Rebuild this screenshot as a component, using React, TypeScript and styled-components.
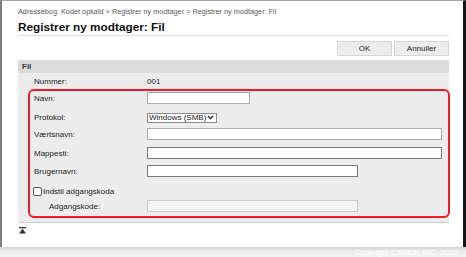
import React, { ReactElement } from "react";
import styled, { createGlobalStyle } from "styled-components";

const GlobalStyle = createGlobalStyle`
  html, body {
    margin: 0;
    padding: 0;
    background: #ffffff;
  }
  * {
    box-sizing: border-box;
  }
`;

const Screen = styled.div`
  width: 466px;
  height: 257px;
  display: flex;
  flex-direction: column;
  font-family: "Liberation Sans", Arial, sans-serif;
  overflow: hidden;
`;

const Window = styled.div`
  flex: 0 0 247px;
  display: flex;
  flex-direction: column;
  background: #ffffff;
  border-left: 2px solid #7d7d7d;
  border-top: 1px solid #a3a3a3;
  border-right: 3px solid #161616;
  padding: 6px 14px 0 16px;
`;

const Footer = styled.div`
  flex: 1;
  display: flex;
  justify-content: flex-end;
  align-items: flex-end;
  padding: 0 8px 0 0;
  background: linear-gradient(#cfcfcf, #ececec 40%, #f3f3f3);
  color: #ffffff;
  font-size: 8px;
  line-height: 9px;
`;

const Breadcrumb = styled.div`
  font-size: 7.3px;
  line-height: 10px;
  color: #5a5a5a;
  white-space: nowrap;
`;

const Title = styled.h1`
  margin: 3px 0 0 0;
  padding-bottom: 1px;
  font-size: 11.8px;
  line-height: 14px;
  font-weight: bold;
  color: #111111;
  border-bottom: 1px solid #dedede;
`;

const Toolbar = styled.div`
  display: flex;
  justify-content: flex-end;
  gap: 2px;
  margin-top: 5px;
`;

const Button = styled.button`
  width: 55px;
  height: 15px;
  padding: 0;
  font-family: inherit;
  font-size: 8px;
  color: #222222;
  background: #ececec;
  border: 1px solid #d6d6d6;
`;

const SectionHeader = styled.div`
  margin-top: 4px;
  height: 13px;
  padding-left: 4px;
  display: flex;
  align-items: center;
  background: #dcdcdc;
  font-size: 8px;
  font-weight: bold;
  color: #333333;
`;

const SectionBody = styled.div`
  background: #ececec;
  padding: 2px 0 4px 16px;
  border-bottom: 1px solid #cfcfcf;
`;

const RedFrame = styled.div`
  margin: 2px -1px 0 -6px;
  border: 2px solid #ee1c24;
  border-radius: 6px;
  padding: 1px 6px 4px 4px;
  display: flex;
  flex-direction: column;
`;

const Row = styled.div<{ $gap?: number; $indent?: number }>`
  display: grid;
  grid-template-columns: 113px 1fr;
  align-items: center;
  height: 12px;
  margin-top: ${(p) => p.$gap ?? 0}px;
  font-size: 8px;
  color: #222222;

  & > .label {
    padding-left: ${(p) => p.$indent ?? 0}px;
  }
`;

const Value = styled.div`
  font-size: 8px;
  color: #222222;
`;

const TextInput = styled.div<{ $width?: number; $dark?: boolean; $disabled?: boolean }>`
  height: 12px;
  width: ${(p) => (p.$width ? `${p.$width}px` : "100%")};
  background: ${(p) => (p.$disabled ? "#f3f3f3" : "#ffffff")};
  border: 1px solid
    ${(p) => (p.$disabled ? "#c9c9c9" : p.$dark ? "#7a7a7a" : "#a9a9a9")};
`;

const SelectBox = styled.div`
  height: 10px;
  width: 70px;
  display: flex;
  align-items: center;
  justify-content: space-between;
  padding: 0 2px 0 1px;
  background: #ffffff;
  border: 1px solid #8a8a8a;
  font-size: 8px;
  color: #222222;
  white-space: nowrap;
  margin-top: 1px;
`;

const CheckRow = styled.label`
  display: flex;
  align-items: center;
  gap: 1px;
  height: 12px;
  margin: 8px 0 0 -1px;
  font-size: 8px;
  color: #222222;
`;

const CheckBox = styled.span`
  width: 9px;
  height: 9px;
  background: #ffffff;
  border: 1px solid #555555;
  border-radius: 2px;
`;

const TopLink = styled.div`
  margin: 4px 0 0 1px;
  height: 7px;
  display: flex;
`;

const ToTopIcon = (): ReactElement => (
  <svg width="7" height="7" viewBox="0 0 7 7">
    <rect x="0" y="0" width="7" height="1.3" fill="#333" />
    <polygon points="3.5,1.8 7,6.5 0,6.5" fill="#333" />
  </svg>
);

const Chevron = (): ReactElement => (
  <svg width="7" height="5" viewBox="0 0 7 5">
    <polyline
      points="1,1 3.5,3.6 6,1"
      fill="none"
      stroke="#222"
      strokeWidth="1.3"
    />
  </svg>
);

const App = (): ReactElement => {
  return (
    <Screen>
      <GlobalStyle />
      <Window>
        <Breadcrumb>
          Adressebog: Kodet opkald &gt; Registrer ny modtager &gt; Registrer
          ny modtager: Fil
        </Breadcrumb>
        <Title>Registrer ny modtager: Fil</Title>
        <Toolbar>
          <Button>OK</Button>
          <Button>Annuller</Button>
        </Toolbar>
        <SectionHeader>Fil</SectionHeader>
        <SectionBody>
          <Row>
            <span className="label">Nummer:</span>
            <Value>001</Value>
          </Row>
          <RedFrame>
            <Row>
              <span className="label">Navn:</span>
              <TextInput $width={103} />
            </Row>
            <Row $gap={7}>
              <span className="label">Protokol:</span>
              <SelectBox>
                Windows (SMB)
                <Chevron />
              </SelectBox>
            </Row>
            <Row $gap={5}>
              <span className="label">Værtsnavn:</span>
              <TextInput />
            </Row>
            <Row $gap={7}>
              <span className="label">Mappesti:</span>
              <TextInput $dark />
            </Row>
            <Row $gap={6}>
              <span className="label">Brugernavn:</span>
              <TextInput $width={211} $dark />
            </Row>
            <CheckRow>
              <CheckBox />
              Indstil adgangskoda
            </CheckRow>
            <Row $gap={3} $indent={15}>
              <span className="label">Adgangskode:</span>
              <TextInput $width={211} $disabled />
            </Row>
          </RedFrame>
        </SectionBody>
        <TopLink>
          <ToTopIcon />
        </TopLink>
      </Window>
      <Footer>Copyright CANON INC. 2022</Footer>
    </Screen>
  );
};

export default App;
